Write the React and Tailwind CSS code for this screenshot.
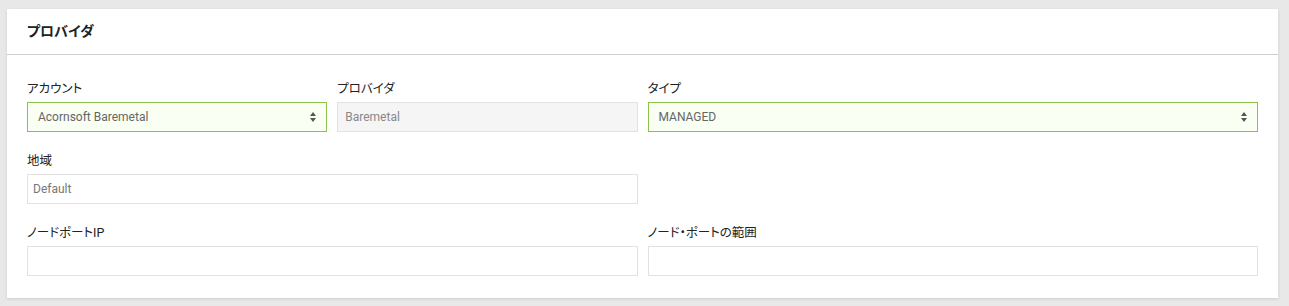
const Arrows = () => (
  <svg width="8" height="12" viewBox="0 0 8 12" className="absolute right-[9px] top-[8px]">
    <path d="M4 1 L7 5 L1 5 Z" fill="#555" />
    <path d="M4 11 L7 7 L1 7 Z" fill="#555" />
  </svg>
);

const Label = ({ children }) => (
  <div className="h-[18px] mb-[4px] text-[12.5px] leading-[18px] text-[#222] [font-feature-settings:'palt']">
    {children}
  </div>
);

const Select = ({ value }) => (
  <div className="relative h-[30px] border border-[#8bc34a] bg-[#f9fff3] pl-[10px] text-[12px] leading-[28px] text-[#666]">
    {value}
    <Arrows />
  </div>
);

const Input = ({ value, disabled }) => (
  <div
    className={
      disabled
        ? "h-[30px] border border-[#e2e2e2] bg-[#f5f5f5] pl-[7px] text-[12px] leading-[28px] text-[#888]"
        : "h-[30px] border border-[#e2e2e2] bg-white pl-[5px] text-[12px] leading-[28px] text-[#777]"
    }
  >
    {value}
  </div>
);

export default function App() {
  return (
    <div
      className="w-[1289px] h-[306px] bg-[#e8e8e8] pt-[9px] pl-[7px]"
      style={{ fontFamily: 'Roboto, "Noto Sans CJK JP", sans-serif' }}
    >
      <div className="w-[1271px] h-[289px] bg-white shadow-[0_1px_3px_rgba(0,0,0,0.12)]">
        <div className="h-[46px] border-b border-[#cfcfcf] pl-[20px] pt-[11px] text-[14px] font-bold leading-[22px] text-[#222] [font-feature-settings:'palt']">
          プロバイダ
        </div>
        <div className="px-[20px] pt-[25px] grid grid-cols-4 gap-x-[10px] gap-y-[20px]">
          <div>
            <Label>アカウント</Label>
            <Select value="Acornsoft Baremetal" />
          </div>
          <div>
            <Label>プロバイダ</Label>
            <Input value="Baremetal" disabled />
          </div>
          <div className="col-span-2">
            <Label>タイプ</Label>
            <Select value="MANAGED" />
          </div>
          <div className="col-span-2">
            <Label>地域</Label>
            <Input value="Default" />
          </div>
          <div className="col-span-2" />
          <div className="col-span-2">
            <Label>ノードポートIP</Label>
            <Input value="" />
          </div>
          <div className="col-span-2">
            <Label>ノード・ポートの範囲</Label>
            <Input value="" />
          </div>
        </div>
      </div>
    </div>
  );
}
